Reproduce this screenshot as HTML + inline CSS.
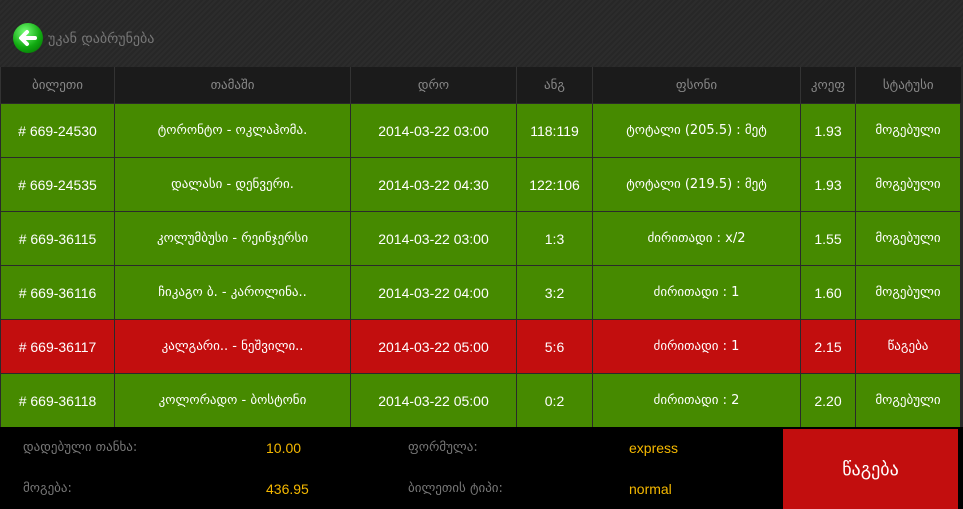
<!DOCTYPE html>
<html><head><meta charset="utf-8"><style>
body{margin:0;width:963px;height:509px;overflow:hidden;background:#2a2a2a;font-family:"Liberation Sans","DejaVu Sans",sans-serif;}
.top{position:absolute;left:0;top:0;width:963px;height:67px;background:repeating-linear-gradient(135deg,#2c2c2c 0 2px,#272727 2px 4px);}
.back{position:absolute;left:13px;top:23px;width:30px;height:30px;border-radius:50%;background:radial-gradient(circle at 40% 30%,#7f7,#1a1 55%,#060);}
.back svg{position:absolute;left:0;top:0}
.bt{position:absolute;left:48px;top:31px;color:#777;font-size:14px;font-family:"DejaVu Sans",sans-serif;}
table{position:absolute;left:0;top:67px;border-collapse:collapse;width:960px;table-layout:fixed;}
th{background:#1b1b1b;color:#888;font-weight:normal;font-size:13px;height:36px;border-left:1px solid #333;font-family:"DejaVu Sans",sans-serif;padding:0;}
td{height:53px;color:#fff;font-size:14px;text-align:center;border:1px solid #2a2a2a;padding:0;}
tr.g td{background:#468a00}
tr.r td{background:#c20e0e}
.ge{font-family:"DejaVu Sans",sans-serif;font-size:13px}
.foot{position:absolute;left:0;top:427px;width:963px;height:82px;background:#000;}
.l{position:absolute;color:#777;font-size:13px;font-family:"DejaVu Sans",sans-serif;}
.v{position:absolute;color:#f5b800;font-size:14px;}
.btn{position:absolute;left:783px;top:2px;width:175px;height:80px;background:#c20e0e;color:#fff;font-size:18px;font-family:"DejaVu Sans",sans-serif;display:flex;align-items:center;justify-content:center;}
</style></head><body>
<div class="top"><div class="back"><svg width="30" height="30"><path d="M22 15H9M14 9l-6 6 6 6" stroke="#fff" stroke-width="4" fill="none" stroke-linecap="round" stroke-linejoin="round"/></svg></div><div class="bt">უკან დაბრუნება</div></div>
<table>
<colgroup><col style="width:114px"><col style="width:236px"><col style="width:166px"><col style="width:76px"><col style="width:208px"><col style="width:55px"><col style="width:105px"></colgroup>
<tr><th>ბილეთი</th><th>თამაში</th><th>დრო</th><th>ანგ</th><th>ფსონი</th><th>კოეფ</th><th>სტატუსი</th></tr>
<tr class="g"><td># 669-24530</td><td class="ge">ტორონტო - ოკლაჰომა.</td><td>2014-03-22 03:00</td><td>118:119</td><td class="ge">ტოტალი (205.5) : მეტ</td><td>1.93</td><td class="ge">მოგებული</td></tr>
<tr class="g"><td># 669-24535</td><td class="ge">დალასი - დენვერი.</td><td>2014-03-22 04:30</td><td>122:106</td><td class="ge">ტოტალი (219.5) : მეტ</td><td>1.93</td><td class="ge">მოგებული</td></tr>
<tr class="g"><td># 669-36115</td><td class="ge">კოლუმბუსი - რეინჯერსი</td><td>2014-03-22 03:00</td><td>1:3</td><td class="ge">ძირითადი : x/2</td><td>1.55</td><td class="ge">მოგებული</td></tr>
<tr class="g"><td># 669-36116</td><td class="ge">ჩიკაგო ბ. - კაროლინა..</td><td>2014-03-22 04:00</td><td>3:2</td><td class="ge">ძირითადი : 1</td><td>1.60</td><td class="ge">მოგებული</td></tr>
<tr class="r"><td># 669-36117</td><td class="ge">კალგარი.. - ნეშვილი..</td><td>2014-03-22 05:00</td><td>5:6</td><td class="ge">ძირითადი : 1</td><td>2.15</td><td class="ge">წაგება</td></tr>
<tr class="g"><td># 669-36118</td><td class="ge">კოლორადო - ბოსტონი</td><td>2014-03-22 05:00</td><td>0:2</td><td class="ge">ძირითადი : 2</td><td>2.20</td><td class="ge">მოგებული</td></tr>
</table>
<div class="foot">
<div class="l" style="left:23px;top:13px">დადებული თანხა:</div><div class="v" style="left:266px;top:13px">10.00</div>
<div class="l" style="left:408px;top:13px">ფორმულა:</div><div class="v" style="left:629px;top:13px">express</div>
<div class="l" style="left:23px;top:54px">მოგება:</div><div class="v" style="left:266px;top:54px">436.95</div>
<div class="l" style="left:408px;top:54px">ბილეთის ტიპი:</div><div class="v" style="left:629px;top:54px">normal</div>
<div class="btn">წაგება</div>
</div>
</body></html>
